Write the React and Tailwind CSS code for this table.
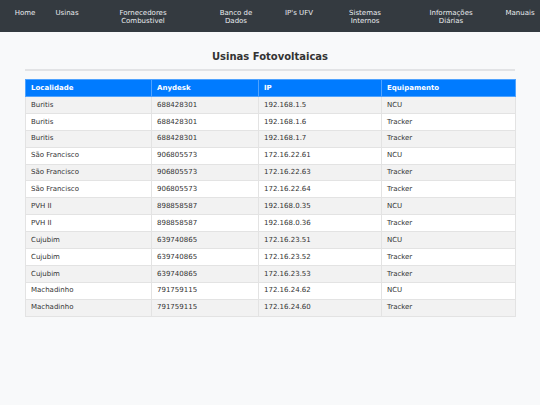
const navItems = [
  { label: ["Home"], w: "w-[40px]" },
  { label: ["Usinas"], w: "w-[44px]" },
  { label: ["Fornecedores", "Combustivel"], w: "w-[108px]" },
  { label: ["Banco de", "Dados"], w: "w-[78px]" },
  { label: ["IP's UFV"], w: "w-[48px]" },
  { label: ["Sistemas", "Internos"], w: "w-[84px]" },
  { label: ["Informações", "Diárias"], w: "w-[88px]" },
  { label: ["Manuais"], w: "w-[50px]" },
];

const rows = [
  ["Buritis", "688428301", "192.168.1.5", "NCU"],
  ["Buritis", "688428301", "192.168.1.6", "Tracker"],
  ["Buritis", "688428301", "192.168.1.7", "Tracker"],
  ["São Francisco", "906805573", "172.16.22.61", "NCU"],
  ["São Francisco", "906805573", "172.16.22.63", "Tracker"],
  ["São Francisco", "906805573", "172.16.22.64", "Tracker"],
  ["PVH II", "898858587", "192.168.0.35", "NCU"],
  ["PVH II", "898858587", "192.168.0.36", "Tracker"],
  ["Cujubim", "639740865", "172.16.23.51", "NCU"],
  ["Cujubim", "639740865", "172.16.23.52", "Tracker"],
  ["Cujubim", "639740865", "172.16.23.53", "Tracker"],
  ["Machadinho", "791759115", "172.16.24.62", "NCU"],
  ["Machadinho", "791759115", "172.16.24.60", "Tracker"],
];

const headers = ["Localidade", "Anydesk", "IP", "Equipamento"];
const colWidths = ["w-[126px]", "w-[107px]", "w-[123px]", "w-[134px]"];

export default function App() {
  return (
    <div className="min-h-[405px] bg-[#f8f9fa] font-['DejaVu_Sans',sans-serif]">
      <nav className="h-[32px] bg-[#343a40] flex items-start pl-[5px] pt-[9px] overflow-hidden">
        {navItems.map((item) => (
          <div
            key={item.label.join(" ")}
            className={`${item.w} shrink-0 text-center text-[7px] leading-[8px] text-[#e9ecef]`}
          >
            {item.label.map((line) => (
              <div key={line}>{line}</div>
            ))}
          </div>
        ))}
      </nav>

      <div className="w-[490px] mx-auto pt-[19px]">
        <h1 className="text-center font-bold text-[10px] leading-[12px] text-[#333]">
          Usinas Fotovoltaicas
        </h1>
        <div className="mt-[6px] h-[2px] bg-[#e2e3e5]" />

        <table className="mt-[8px] w-full table-fixed border-collapse text-[7px] text-[#333]">
          <colgroup>
            {colWidths.map((w) => (
              <col key={w} className={w} />
            ))}
          </colgroup>
          <thead>
            <tr className="h-[17px] bg-[#007bff]">
              {headers.map((h) => (
                <th
                  key={h}
                  className="border border-[#4fa3ff] px-[5px] text-left font-bold text-white"
                >
                  {h}
                </th>
              ))}
            </tr>
          </thead>
          <tbody>
            {rows.map((r, i) => (
              <tr
                key={i}
                className={`h-[16.9px] ${i % 2 === 0 ? "bg-[#f2f2f2]" : "bg-white"}`}
              >
                {r.map((c, j) => (
                  <td key={j} className="border border-[#e3e3e3] px-[5px]">
                    {c}
                  </td>
                ))}
              </tr>
            ))}
          </tbody>
        </table>
      </div>
    </div>
  );
}
